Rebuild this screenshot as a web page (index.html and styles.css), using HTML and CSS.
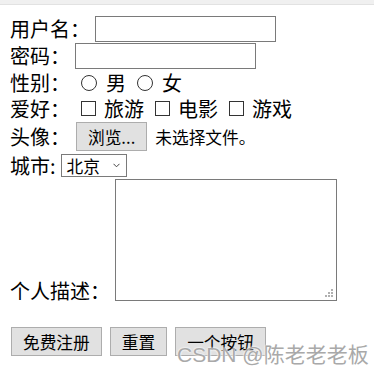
FILE: index.html
```html
<!DOCTYPE html>
<html lang="zh">
<head>
    <meta charset="UTF-8">
    <title>注册</title>
    <link rel="stylesheet" href="styles.css">
</head>
<body>
    <div class="topbar"></div>
    <form class="reg-form">
        <div class="row">
            <span class="lbl">用户名：</span>
            <input type="text" class="text-input">
        </div>
        <div class="row">
            <span class="lbl">密码：</span>
            <input type="password" class="text-input">
        </div>
        <div class="row">
            <span class="lbl">性别：</span>
            <label class="opt"><input type="radio" name="sex" class="radio">男</label>
            <label class="opt"><input type="radio" name="sex" class="radio">女</label>
        </div>
        <div class="row row-hobby">
            <span class="lbl">爱好：</span>
            <label class="opt"><input type="checkbox" class="check">旅游</label>
            <label class="opt"><input type="checkbox" class="check">电影</label>
            <label class="opt"><input type="checkbox" class="check">游戏</label>
        </div>
        <div class="row row-file">
            <span class="lbl">头像：</span>
            <span class="btn file-btn">浏览...</span>
            <span class="file-name">未选择文件。</span>
        </div>
        <div class="row row-city">
            <span class="lbl">城市:</span>
            <span class="select">北京
                <svg class="chev" width="7" height="5" viewBox="0 0 7 5"><path d="M0.5 0.8 L3.5 3.8 L6.5 0.8" fill="none" stroke="#444" stroke-width="1"/></svg>
            </span>
        </div>
        <div class="row row-desc">
            <span class="lbl desc-lbl">个人描述：</span>
            <div class="textarea">
                <svg class="grip" width="10" height="10" viewBox="0 0 10 10" fill="#b0b0b0">
                    <rect x="7" y="1" width="2" height="2"/>
                    <rect x="4" y="4" width="2" height="2"/>
                    <rect x="7" y="4" width="2" height="2"/>
                    <rect x="1" y="7" width="2" height="2"/>
                    <rect x="4" y="7" width="2" height="2"/>
                    <rect x="7" y="7" width="2" height="2"/>
                </svg>
            </div>
        </div>
        <div class="actions">
            <button type="button" class="btn">免费注册</button>
            <button type="button" class="btn">重置</button>
            <button type="button" class="btn">一个按钮</button>
        </div>
    </form>
    <div class="watermark">CSDN @陈老老老板</div>
</body>
</html>
```

FILE: styles.css
```css
* {
    box-sizing: border-box;
}

body {
    margin: 0;
    background: #fff;
    color: #000;
    font-family: "Noto Sans CJK SC", "Microsoft YaHei", sans-serif;
    font-size: 20px;
    position: relative;
    height: 376px;
    overflow: hidden;
}

.topbar {
    height: 5px;
    background: #f0f0f0;
    border-bottom: 1px solid #e2e2e2;
}

.reg-form {
    padding: 10px 0 0 10px;
}

.row {
    display: flex;
    align-items: center;
    height: 27px;
    line-height: 22px;
}

.row-hobby {
    height: 25px;
}

.row-file {
    height: 31px;
}

.row-city {
    height: 27px;
}

.lbl {
    margin-right: 5px;
    white-space: nowrap;
}

.text-input {
    width: 181px;
    height: 26px;
    margin: 0;
    border: 1px solid #7a7a7a;
    padding: 0 3px;
    background: #fff;
    font-size: 16px;
}

.opt {
    display: flex;
    align-items: center;
    margin-left: 6px;
}

.opt + .opt {
    margin-left: 11px;
}

.radio {
    appearance: none;
    width: 16px;
    height: 16px;
    margin: 0 9px 0 0;
    border: 1px solid #333;
    border-radius: 50%;
    background: #fff;
}

.check {
    appearance: none;
    width: 15px;
    height: 15px;
    margin: 0 8px 0 0;
    border: 1px solid #333;
    background: #fff;
}

.btn {
    display: inline-flex;
    align-items: center;
    justify-content: center;
    height: 29px;
    padding: 0 11px;
    margin: 0;
    border: 1px solid #adadad;
    background: #e1e1e1;
    color: #000;
    font-family: "Noto Sans CJK SC", "Microsoft YaHei", sans-serif;
    font-size: 16.7px;
    line-height: 20px;
    white-space: nowrap;
}

.file-btn {
    margin-left: 1px;
}

.file-name {
    margin-left: 8px;
    font-size: 16.7px;
    white-space: nowrap;
}

.select {
    display: flex;
    align-items: center;
    width: 66px;
    height: 23px;
    padding-left: 5px;
    border: 1px solid #7a7a7a;
    font-size: 16.7px;
    line-height: 20px;
}

.chev {
    margin-left: 13px;
}

.row-desc {
    height: 122px;
    align-items: flex-end;
}

.desc-lbl {
    line-height: 20px;
}

.textarea {
    position: relative;
    width: 222px;
    height: 122px;
    border: 1px solid #7a7a7a;
    background: #fff;
}

.grip {
    position: absolute;
    right: 2px;
    bottom: 2px;
}

.actions {
    display: flex;
    gap: 8px;
    margin-top: 26px;
    padding-left: 1px;
}

.watermark {
    position: absolute;
    left: 177px;
    top: 342px;
    font-family: "Liberation Sans", "Noto Sans CJK SC", sans-serif;
    font-size: 21px;
    line-height: 26px;
    color: #a9a9a9;
    white-space: nowrap;
    text-shadow: 0 0 2px #fff, 0 0 2px #fff;
}
```
